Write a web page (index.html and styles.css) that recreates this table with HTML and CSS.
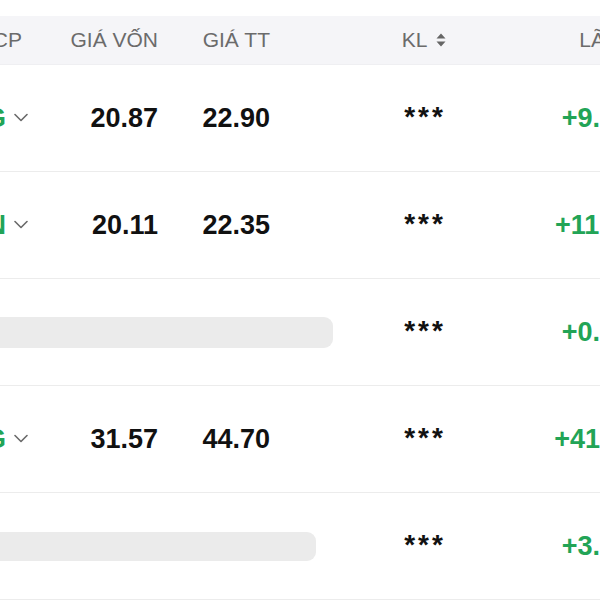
FILE: index.html
```html
<!DOCTYPE html>
<html lang="vi">
<head>
<meta charset="utf-8">
<title>Danh mục</title>
<link rel="stylesheet" href="styles.css">
</head>
<body>
<div class="table">
  <div class="row head">
    <div class="c1 hcell">MÃ CP</div>
    <div class="c2 hcell">GIÁ VỐN</div>
    <div class="c3 hcell">GIÁ TT</div>
    <div class="c4 hcell">KL
      <svg class="sort" width="14" height="16" viewBox="0 0 14 16"><path d="M7 1.5 L11.5 6.5 H2.5 Z M7 14.5 L11.5 9.5 H2.5 Z" fill="#666"/></svg>
    </div>
    <div class="c5 hcell lh">LÃI/LỖ</div>
  </div>

  <div class="row">
    <div class="c1 tick"><span class="sym">HPG</span><svg class="chev" width="14" height="9" viewBox="0 0 14 9"><path d="M1 1.5 L7 7.5 L13 1.5" fill="none" stroke="#6a6a6a" stroke-width="1.6" stroke-linecap="round" stroke-linejoin="round"/></svg></div>
    <div class="c2 num">20.87</div>
    <div class="c3 num">22.90</div>
    <div class="c4 stars">***</div>
    <div class="c5 pl">+9.82%</div>
  </div>

  <div class="row">
    <div class="c1 tick"><span class="sym">VHN</span><svg class="chev" width="14" height="9" viewBox="0 0 14 9"><path d="M1 1.5 L7 7.5 L13 1.5" fill="none" stroke="#6a6a6a" stroke-width="1.6" stroke-linecap="round" stroke-linejoin="round"/></svg></div>
    <div class="c2 num">20.11</div>
    <div class="c3 num">22.35</div>
    <div class="c4 stars">***</div>
    <div class="c5 pl">+11.14%</div>
  </div>

  <div class="row">
    <div class="skel sk-a"></div>
    <div class="c4 stars">***</div>
    <div class="c5 pl">+0.55%</div>
  </div>

  <div class="row">
    <div class="c1 tick"><span class="sym">DGG</span><svg class="chev" width="14" height="9" viewBox="0 0 14 9"><path d="M1 1.5 L7 7.5 L13 1.5" fill="none" stroke="#6a6a6a" stroke-width="1.6" stroke-linecap="round" stroke-linejoin="round"/></svg></div>
    <div class="c2 num">31.57</div>
    <div class="c3 num">44.70</div>
    <div class="c4 stars">***</div>
    <div class="c5 pl">+41.59%</div>
  </div>

  <div class="row">
    <div class="skel sk-b"></div>
    <div class="c4 stars">***</div>
    <div class="c5 pl">+3.36%</div>
  </div>
</div>
</body>
</html>
```

FILE: styles.css
```css
html, body {
  margin: 0;
  padding: 0;
  background: #ffffff;
  overflow: hidden;
  width: 600px;
  height: 600px;
}

body {
  font-family: "Liberation Sans", Arial, sans-serif;
  color: #111111;
}

.table {
  margin-left: -100px;
  padding-top: 16px;
  width: 760px;
}

.row {
  display: grid;
  grid-template-columns: 130px 128px 112px 290px 96px;
  align-items: center;
  height: 106px;
  border-bottom: 1px solid #ececec;
}

.row.head {
  height: 48px;
  background: #f5f5f8;
  border-bottom: 1px solid #efeff2;
}

.hcell {
  font-size: 21px;
  color: #6b6b6b;
  white-space: nowrap;
}

.c1 { grid-column: 1; }
.c2 { grid-column: 2; text-align: right; }
.c3 { grid-column: 3; text-align: right; }
.c4 {
  grid-column: 4;
  display: flex;
  justify-content: center;
  align-items: center;
  padding-left: 20px;
}
.c5 {
  grid-column: 5;
  display: flex;
  justify-content: center;
  white-space: nowrap;
}

.hcell.lh {
  padding-left: 8px;
}

.hcell.c1 {
  text-align: right;
  padding-right: 8px;
}

.sort {
  margin-left: 7px;
}

.tick {
  display: flex;
  justify-content: flex-end;
  align-items: center;
  padding-right: 2px;
  gap: 8px;
}

.sym {
  font-size: 27px;
  font-weight: 700;
  color: #22a456;
}

.chev {
  margin-top: -2px;
}

.num {
  font-size: 27px;
  font-weight: 700;
  color: #111111;
}

.stars {
  font-size: 28px;
  font-weight: 700;
  letter-spacing: 3px;
  margin-top: -3px;
  color: #111111;
}

.pl {
  font-size: 27px;
  font-weight: 700;
  color: #22a456;
}

.skel {
  grid-column: 1 / 4;
  background: #ebebeb;
  border-radius: 0 9px 9px 0;
}

.sk-a {
  width: 433px;
  height: 31px;
}

.sk-b {
  width: 416px;
  height: 29px;
}
```
